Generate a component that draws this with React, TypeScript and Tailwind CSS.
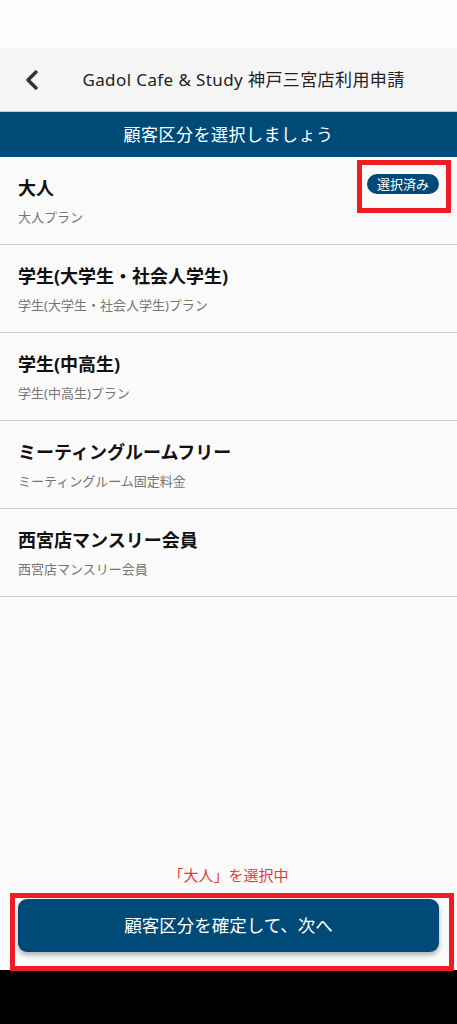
import { ChevronLeft } from "lucide-react";

const plans = [
  { title: "大人", sub: "大人プラン", selected: true },
  { title: "学生(大学生・社会人学生)", sub: "学生(大学生・社会人学生)プラン" },
  { title: "学生(中高生)", sub: "学生(中高生)プラン" },
  { title: "ミーティングルームフリー", sub: "ミーティングルーム固定料金" },
  { title: "西宮店マンスリー会員", sub: "西宮店マンスリー会員" },
];

export default function App() {
  return (
    <div
      className="relative w-[457px] h-[1024px] bg-[#fafafa] flex flex-col overflow-hidden"
      style={{ fontFamily: '"Noto Sans", "Noto Sans CJK JP", sans-serif' }}
    >
      {/* status bar space */}
      <div className="h-[48px] shrink-0 bg-[#fcfcfc]" />

      {/* header */}
      <div className="h-[64px] shrink-0 bg-[#f5f5f5] border-b border-[#c8c8c8] flex items-center relative">
        <ChevronLeft className="absolute left-[16px] w-[32px] h-[32px] text-[#333]" strokeWidth={2.6} />
        <div className="flex-1 text-center pl-[30px] text-[17px] text-[#222] tracking-[0.4px]">
          Gadol Cafe &amp; Study 神戸三宮店利用申請
        </div>
      </div>

      {/* section bar */}
      <div className="h-[45px] shrink-0 bg-[#004a77] flex items-center justify-center text-white text-[17px] tracking-[0.5px]">
        顧客区分を選択しましょう
      </div>

      {/* plan list */}
      <div className="flex flex-col">
        {plans.map((p, i) => (
          <div
            key={i}
            className="h-[88px] border-b border-[#d2d2d2] flex flex-col justify-center pl-[18px] pr-[18px] relative"
          >
            <div className="text-[18px] font-bold text-[#111] leading-[24px]">{p.title}</div>
            <div className="text-[13px] text-[#757575] leading-[18px] mt-[8px]">{p.sub}</div>
            {p.selected && (
              <span className="absolute left-[367px] top-[17px] w-[72px] h-[20px] rounded-full bg-[#004a77] text-white text-[13px] leading-[20px] text-center">
                選択済み
              </span>
            )}
          </div>
        ))}
      </div>

      <div className="flex-1" />

      {/* footer */}
      <div className="shrink-0 flex flex-col items-center">
        <div className="text-[15px] text-[#e53935] leading-[20px] mb-[14px]">「大人」を選択中</div>
        <div className="w-full px-[18px] pb-[18px]">
          <button className="w-full h-[53px] rounded-[9px] bg-[#004a77] text-white text-[17.5px] shadow-[0_3px_5px_rgba(0,0,0,0.3)]">
            顧客区分を確定して、次へ
          </button>
        </div>
      </div>

      <div className="h-[54px] shrink-0 bg-black" />

      {/* annotation boxes */}
      <div className="absolute left-[357px] top-[160px] w-[94px] h-[53px] border-[5px] border-[#ee1c25]" />
      <div className="absolute left-[10px] top-[893px] w-[444px] h-[78px] border-[5px] border-[#ee1c25]" />
    </div>
  );
}
